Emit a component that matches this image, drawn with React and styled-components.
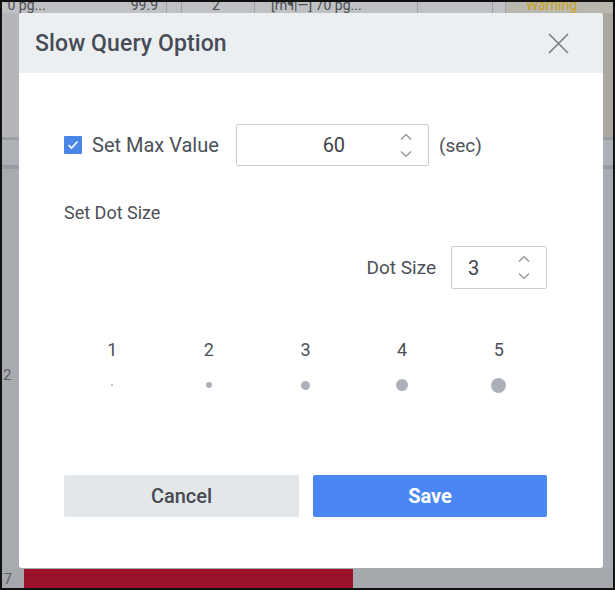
import React from "react";
import styled, { createGlobalStyle } from "styled-components";

const Global = createGlobalStyle`
  html, body { margin: 0; padding: 0; background: #fff; }
  body { font-family: Roboto, "Liberation Sans", sans-serif; }
  * { box-sizing: border-box; }
`;

const Frame = styled.div`
  position: relative;
  width: 615px;
  height: 590px;
  border: 2px solid #111;
  overflow: hidden;
  display: flex;
  flex-direction: column;
  background: #a8abb0;
`;

const TopStrip = styled.div`
  height: 11px;
  display: flex;
  background: #bfc1c4;
  overflow: hidden;
`;

const StripCell = styled.div`
  width: ${(p) => p.$w}px;
  flex: ${(p) => (p.$w ? "none" : 1)};
  border-right: ${(p) => (p.$line ? "1px solid #9ea1a6" : "none")};
  background: ${(p) => p.$bg || "transparent"};
  color: ${(p) => p.$color || "#4a4d52"};
  font-size: 14px;
  line-height: 14px;
  margin-top: -4px;
  padding-left: ${(p) => p.$pad || 0}px;
  white-space: nowrap;
  overflow: hidden;
  display: flex;
  justify-content: space-between;
`;

const Upper = styled.div`
  height: 124px;
  display: flex;
`;

const UpperMain = styled.div`
  flex: 1;
  background: #b4b6ba;
`;

const UpperWarn = styled.div`
  width: 104px;
  background: #aaa89f;
`;

const Band = styled.div`
  height: ${(p) => p.$h}px;
  background: ${(p) => p.$bg};
`;

const Rest = styled.div`
  flex: 1;
  background: #a8abb0;
  padding-top: 197px;
  padding-left: 1px;
  color: #5a5d62;
  font-size: 15px;
`;

const BottomRow = styled.div`
  height: 19px;
  display: flex;
  align-items: stretch;
  background: #a5a8ad;
  color: #5a5d62;
  font-size: 14px;
`;

const RowNum = styled.div`
  width: 22px;
  padding-left: 2px;
  padding-top: 2px;
`;

const RedBar = styled.div`
  width: 329px;
  background: #9b132b;
`;

const Dialog = styled.div`
  position: absolute;
  left: 17px;
  top: 11px;
  width: 584px;
  height: 555px;
  background: #fff;
  border-radius: 3px;
  overflow: hidden;
  display: flex;
  flex-direction: column;
`;

const Header = styled.div`
  height: 60px;
  background: #eceff2;
  display: flex;
  align-items: center;
  justify-content: space-between;
  padding: 0 34px 0 16px;
`;

const Title = styled.h2`
  margin: 0;
  font-size: 23px;
  font-weight: 500;
  color: #474c56;
  letter-spacing: 0.1px;
`;

const CloseBtn = styled.button`
  width: 22px;
  height: 22px;
  padding: 0;
  border: none;
  background: none;
  display: flex;
  align-items: center;
  justify-content: center;
  cursor: pointer;
`;

const Body = styled.div`
  flex: 1;
  display: flex;
  flex-direction: column;
  padding: 51px 56px 0 45px;
`;

const MaxRow = styled.div`
  display: flex;
  align-items: center;
  height: 42px;
`;

const CheckBox = styled.span`
  width: 18px;
  height: 18px;
  background: #4a86e8;
  border-radius: 1px;
  display: flex;
  align-items: center;
  justify-content: center;
  margin-right: 10px;
`;

const Label = styled.span`
  font-size: ${(p) => p.$size || 20}px;
  color: #4c5058;
  white-space: nowrap;
`;

const NumInput = styled.div`
  width: ${(p) => p.$w}px;
  height: ${(p) => p.$h}px;
  border: 1px solid #c9ccd1;
  border-radius: 2px;
  display: flex;
  align-items: center;
  margin-left: ${(p) => p.$ml || 0}px;
  margin-right: ${(p) => p.$mr || 0}px;
  padding-left: ${(p) => p.$pl || 0}px;
  padding-right: ${(p) => p.$pr || 0}px;
`;

const InputValue = styled.span`
  flex: 1;
  font-size: 20px;
  color: #3f434a;
  text-align: ${(p) => (p.$center ? "center" : "left")};
`;

const Spinner = styled.div`
  display: flex;
  flex-direction: column;
  align-items: center;
  gap: ${(p) => p.$gap}px;
`;

const SectionLabel = styled.div`
  margin-top: 36px;
  font-size: 18px;
  color: #4c5058;
  line-height: 22px;
`;

const DotSizeRow = styled.div`
  margin-top: 22px;
  display: flex;
  justify-content: flex-end;
  align-items: center;
`;

const ScaleGrid = styled.div`
  margin-top: 50px;
  display: grid;
  grid-template-columns: repeat(5, 1fr);
  row-gap: 16px;
  justify-items: center;
  align-items: center;
`;

const ScaleNum = styled.div`
  font-size: 18px;
  color: #4c5058;
  line-height: 22px;
`;

const DotCell = styled.div`
  height: 16px;
  display: flex;
  align-items: center;
  justify-content: center;
`;

const Dot = styled.span`
  width: ${(p) => p.$s}px;
  height: ${(p) => p.$s}px;
  border-radius: 50%;
  background: #acb0b9;
`;

const Buttons = styled.div`
  margin-top: 82px;
  display: grid;
  grid-template-columns: 235px 234px;
  column-gap: 14px;
`;

const Btn = styled.button`
  height: 42px;
  border: none;
  border-radius: 2px;
  font-family: Roboto, "Liberation Sans", sans-serif;
  font-size: 20px;
  font-weight: ${(p) => (p.$primary ? 700 : 500)};
  color: ${(p) => (p.$primary ? "#fff" : "#474b52")};
  background: ${(p) => (p.$primary ? "#4b87f4" : "#e4e7ea")};
  cursor: pointer;
`;

const Chevron = ({ up, w = 12 }) => (
  <svg width={w} height={w / 2 + 2} viewBox="0 0 12 8" fill="none">
    <path
      d={up ? "M1 6.5 L6 1.5 L11 6.5" : "M1 1.5 L6 6.5 L11 1.5"}
      stroke="#8a8e95"
      strokeWidth="1.2"
    />
  </svg>
);

export default function App() {
  return (
    <>
      <Global />
      <Frame>
        <TopStrip>
          <StripCell $w={165} $line $pad={3}>
            <span>'0 pg...</span>
            <span style={{ marginRight: 8 }}>99.9</span>
          </StripCell>
          <StripCell $w={15} $line $pad={0} />
          <StripCell $w={73} $line $pad={30}>2</StripCell>
          <StripCell $w={163} $line $pad={16}>[rn¶|—] 70 pg...</StripCell>
          <StripCell $w={75} $line />
          <StripCell $w={13} $line />
          <StripCell $bg="#b9b7ae" $color="#c9a322" $pad={20}>Warning</StripCell>
        </TopStrip>
        <Upper>
          <UpperMain />
          <UpperWarn />
        </Upper>
        <Band $h={3} $bg="#999ea5" />
        <Band $h={25} $bg="#adb0b4" />
        <Band $h={4} $bg="#979ca3" />
        <Rest>2</Rest>
        <BottomRow>
          <RowNum>7</RowNum>
          <RedBar />
        </BottomRow>

        <Dialog>
          <Header>
            <Title>Slow Query Option</Title>
            <CloseBtn aria-label="close">
              <svg width="21" height="21" viewBox="0 0 21 21">
                <path d="M1 1 L20 20 M20 1 L1 20" stroke="#7a7d83" strokeWidth="1.6" />
              </svg>
            </CloseBtn>
          </Header>
          <Body>
            <MaxRow>
              <CheckBox>
                <svg width="12" height="10" viewBox="0 0 12 10">
                  <path d="M1.5 5 L4.5 8 L10.5 1.5" stroke="#fff" strokeWidth="1.6" fill="none" />
                </svg>
              </CheckBox>
              <Label>Set Max Value</Label>
              <NumInput $w={193} $h={42} $ml={17} $mr={10} $pl={31} $pr={16}>
                <InputValue $center>60</InputValue>
                <Spinner $gap={9}>
                  <Chevron up />
                  <Chevron />
                </Spinner>
              </NumInput>
              <Label $size={19}>(sec)</Label>
            </MaxRow>

            <SectionLabel>Set Dot Size</SectionLabel>

            <DotSizeRow>
              <Label $size={19}>Dot Size</Label>
              <NumInput $w={96} $h={43} $ml={15} $pl={16} $pr={16}>
                <InputValue>3</InputValue>
                <Spinner $gap={9}>
                  <Chevron up />
                  <Chevron />
                </Spinner>
              </NumInput>
            </DotSizeRow>

            <ScaleGrid>
              {[1, 2, 3, 4, 5].map((n) => (
                <ScaleNum key={"n" + n}>{n}</ScaleNum>
              ))}
              {[2, 6, 9, 12, 15].map((s, i) => (
                <DotCell key={"d" + i}>
                  <Dot $s={s} />
                </DotCell>
              ))}
            </ScaleGrid>

            <Buttons>
              <Btn>Cancel</Btn>
              <Btn $primary>Save</Btn>
            </Buttons>
          </Body>
        </Dialog>
      </Frame>
    </>
  );
}
